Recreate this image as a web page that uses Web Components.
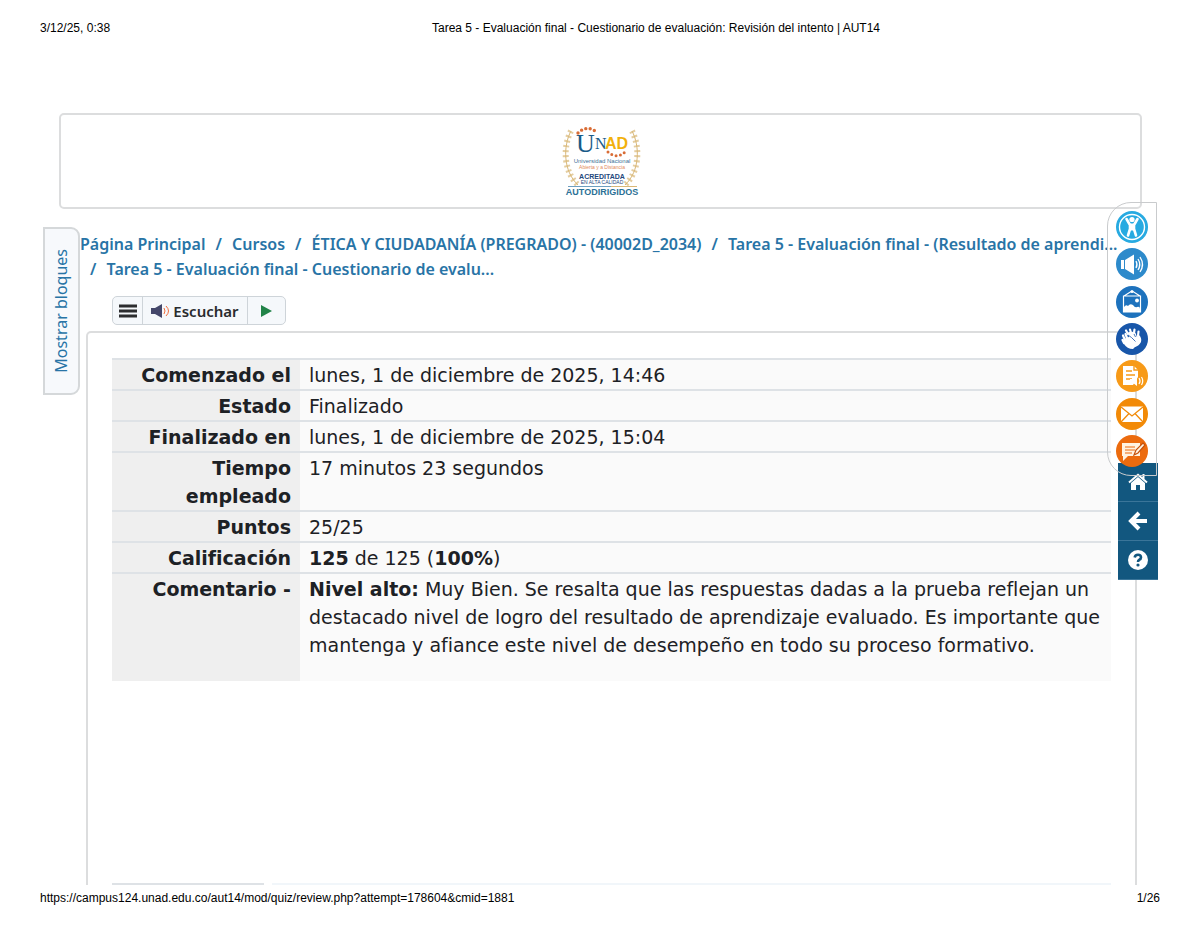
<!DOCTYPE html>
<html lang="es">
<head>
<meta charset="utf-8">
<meta name="viewport" content="width=device-width, initial-scale=1">
<title>Tarea 5 - Evaluación final - Cuestionario de evaluación: Revisión del intento | AUT14</title>
<style>
    body{
        display:flex;
        flex-direction:column;
        margin:0;
        min-height:100vh;
        background:#fff;
        color:#1d2125;
        font-family:"Noto Sans", "Open Sans", sans-serif;
        --link:#2874a6;
        --line:#dcddde;
    }
    review-panel{flex-grow:1;}
</style>
</head>
<body>

<print-line>
    <span slot="start">3/12/25, 0:38</span>
    <span slot="center">Tarea 5 - Evaluación final - Cuestionario de evaluación: Revisión del intento | AUT14</span>
</print-line>

<site-banner></site-banner>

<bread-crumb>
    <crumb-item href="#inicio">Página Principal</crumb-item>
    <crumb-item href="#cursos">Cursos</crumb-item>
    <crumb-item href="#curso">ÉTICA Y CIUDADANÍA (PREGRADO) - (40002D_2034)</crumb-item>
    <crumb-item href="#tarea">Tarea 5 - Evaluación final - (Resultado de aprendi...</crumb-item>
    <crumb-item href="#cuestionario">Tarea 5 - Evaluación final - Cuestionario de evalu...</crumb-item>
</bread-crumb>

<listen-bar>Escuchar</listen-bar>

<review-panel>
    <review-summary></review-summary>
</review-panel>

<print-line class="bottom">
    <span slot="start">https://campus124.unad.edu.co/aut14/mod/quiz/review.php?attempt=178604&amp;cmid=1881</span>
    <span slot="end">1/26</span>
</print-line>

<blocks-tab>Mostrar bloques</blocks-tab>
<page-nav></page-nav>
<access-tools></access-tools>

<template id="print-line">
<style>
    :host{
        display:grid;
        grid-template-columns:392px 1fr auto;
        padding:20px 40px 0;
        font:12px/16px "Liberation Sans", Arial, sans-serif;
        color:#000;
    }
    :host(.bottom){
        grid-template-columns:1fr auto auto;
        padding:5px 40px 22px;
    }
</style>
<slot name="start"></slot>
<slot name="center"></slot>
<slot name="end"></slot>
</template>

<template id="site-banner">
<style>
    :host{
        display:flex;
        justify-content:center;
        box-sizing:border-box;
        height:96px;
        margin:77px 58px 0 59px;
        border:2px solid var(--line);
        border-radius:5px;
    }
    svg{display:block; margin-top:11px;}
</style>
<svg width="80" height="74" viewBox="0 0 80 74" role="img" aria-label="UNAD Autodirigidos" font-family="Liberation Sans, Arial, sans-serif">
    <!-- laurel branches -->
    <g fill="none" stroke="#d9b877">
        <path d="M10 5C2 20 2 45 17 59" stroke-width="1"/>
        <path d="M10 5C2 20 2 45 17 59" stroke-width="6" stroke-dasharray="2 3" opacity=".7"/>
        <path d="M71 5C79 20 79 45 64 59" stroke-width="1"/>
        <path d="M71 5C79 20 79 45 64 59" stroke-width="6" stroke-dasharray="2 3" opacity=".7"/>
    </g>
    <!-- dotted arcs over and under the letters -->
    <path d="M17 7Q26 -2 37 7" fill="none" stroke="#d96c35" stroke-width="3.4" stroke-linecap="round" stroke-dasharray="0 4.5"/>
    <path d="M47 26Q56 34 65 25" fill="none" stroke="#d96c35" stroke-width="3" stroke-linecap="round" stroke-dasharray="0 4.5"/>
    <text x="15" y="26" font-family="Liberation Serif, serif" font-size="26" fill="#195b88">U</text>
    <text x="34" y="23" font-family="Liberation Serif, serif" font-size="16" fill="#195b88">N</text>
    <text x="44" y="23" font-size="16" font-weight="bold" fill="#f2b10c">AD</text>
    <text x="41" y="37" font-size="6" fill="#3c7197" text-anchor="middle">Universidad Nacional</text>
    <text x="41" y="43" font-size="5" fill="#e28a5a" text-anchor="middle">Abierta y a Distancia</text>
    <text x="41" y="53" font-size="7" font-weight="bold" fill="#24487c" text-anchor="middle">ACREDITADA</text>
    <text x="41" y="58" font-size="5" fill="#24487c" text-anchor="middle">EN ALTA CALIDAD</text>
    <path d="M7 60.500H76" stroke="#d9b877"/>
    <path d="M7 60.500H50" stroke="#6e9fc0"/>
    <text x="41" y="69" font-size="9" font-weight="bold" fill="#2b7196" text-anchor="middle">AUTODIRIGIDOS</text>
</svg>
</template>

<template id="bread-crumb">
<style>
    :host{
        display:block;
        margin:23px 80px 0;
    }
    nav{
        display:flex;
        flex-wrap:wrap;
        margin-right:-24px;
    }
</style>
<nav aria-label="Ruta de navegación"><slot></slot></nav>
</template>

<template id="crumb-item">
<style>
    :host{
        display:block;
        color:var(--link);
        font-size:16px;
        font-weight:600;
        line-height:25px;
        white-space:nowrap;
    }
    :host(:not(:first-child))::before{
        content:"/";
        padding:0 6px 0 10px;
    }
    a{color:inherit; text-decoration:none;}
</style>
<a><slot></slot></a>
</template>

<template id="listen-bar">
<style>
    :host{
        display:flex;
        align-self:flex-start;
        margin:14px 0 6px 112px;
        border:1px solid #ced4d9;
        border-radius:5px;
        background:#f5f8fb;
        overflow:hidden;
    }
    button{
        display:flex;
        align-items:center;
        justify-content:center;
        gap:4px;
        height:27px;
        width:38px;
        padding:0;
        border:0;
        background:none;
        color:#292b2e;
        font:600 15px/20px "Noto Sans", sans-serif;
    }
    button + button{border-left:1px solid #ced4d9;}
    .menu{width:29px;}
    .listen{width:105px;}
</style>
<button type="button" class="menu" aria-label="Menú">
    <svg width="18" height="14"><path d="M0 2H18M0 7H18M0 12H18" stroke="#2c2d2f" stroke-width="3"/></svg>
</button>
<button type="button" class="listen">
    <svg width="18" height="16" viewBox="0 0 18 16">
        <path d="M0 5H4L11 1V15L4 11H0Z" fill="#44476a"/>
        <path d="M13 5Q15 8 13 11M15 3Q20 8 15 13" fill="none" stroke="#f06d3c"/>
    </svg>
    <slot></slot>
</button>
<button type="button" aria-label="Reproducir">
    <svg width="11" height="12"><path d="M0 0L11 6L0 12Z" fill="#218348"/></svg>
</button>
</template>

<template id="review-panel">
<style>
    :host{
        display:flex;
        flex-direction:column;
        justify-content:space-between;
        gap:24px;
        margin:0 63px 0 86px;
        padding:25px 24px 0;
        border:2px solid var(--line);
        border-bottom:0;
        border-radius:5px 5px 0 0;
    }
    .next{
        display:grid;
        grid-template-columns:152px 1fr;
        gap:8px;
    }
    .next div{border-top:2px solid #dee2e6;}
    .next div:last-child{border-color:#f1f6fa;}
</style>
<slot></slot>
<div class="next"><div></div><div></div></div>
</template>

<template id="review-summary">
<style>
    :host{display:block;}
    table{
        width:100%;
        border-spacing:0;
        background:#fafafa;
        font:19px/28px Verdana, "DejaVu Sans", sans-serif;
    }
    th, td{
        padding:1px 9px 0;
        border-top:2px solid #dee2e6;
        vertical-align:top;
        text-align:left;
    }
    th{
        width:170px;
        background:#efefef;
        text-align:right;
        font-weight:700;
    }
    p{margin:0 0 22px;}
</style>
<table>
    <tbody>
        <tr><th scope="row">Comenzado el</th><td>lunes, 1 de diciembre de 2025, 14:46</td></tr>
        <tr><th scope="row">Estado</th><td>Finalizado</td></tr>
        <tr><th scope="row">Finalizado en</th><td>lunes, 1 de diciembre de 2025, 15:04</td></tr>
        <tr><th scope="row">Tiempo empleado</th><td>17 minutos 23 segundos</td></tr>
        <tr><th scope="row">Puntos</th><td>25/25</td></tr>
        <tr><th scope="row">Calificación</th><td><b>125</b> de 125 (<b>100%</b>)</td></tr>
        <tr>
            <th scope="row">Comentario -</th>
            <td><p><b>Nivel alto:</b> Muy Bien. Se resalta que las respuestas dadas a la prueba reflejan un destacado nivel de logro del resultado de aprendizaje evaluado. Es importante que mantenga y afiance este nivel de desempeño en todo su proceso formativo.</p></td>
        </tr>
    </tbody>
</table>
</template>

<template id="blocks-tab">
<style>
    :host{
        position:absolute;
        left:43px;
        top:227px;
    }
    button{
        display:block;
        padding:20px 4px;
        border:2px solid #d5d8da;
        border-radius:0 9px 9px 0;
        background:#f7f9fc;
        color:var(--link);
        font:16px/25px "Noto Sans", sans-serif;
    }
    span{
        display:block;
        writing-mode:vertical-rl;
        transform:rotate(180deg);
    }
</style>
<button type="button"><span><slot></slot></span></button>
</template>

<template id="page-nav">
<style>
    :host{
        position:absolute;
        right:42px;
        top:463px;
        width:40px;
    }
    a{
        display:flex;
        align-items:center;
        justify-content:center;
        height:38px;
        border-bottom:1px solid #3a7599;
        background:#12577f;
    }
    svg{display:block;}
</style>
<a href="#inicio" aria-label="Inicio">
    <svg width="20" height="18" viewBox="0 0 20 18" fill="#fff">
        <path d="M10 4L17 10V17H12V12H8V17H3V10Z"/>
        <path d="M1 9.500L10 1.800L19 9.500M15.500 1V6" fill="none" stroke="#fff" stroke-width="2"/>
    </svg>
</a>
<a href="#volver" aria-label="Volver">
    <svg width="20" height="20" viewBox="0 0 20 20"><path d="M11 2L3 10L11 18M4 10H19" fill="none" stroke="#fff" stroke-width="4"/></svg>
</a>
<a href="#ayuda" aria-label="Ayuda">
    <svg width="20" height="20" viewBox="0 0 20 20">
        <circle cx="10" cy="10" r="10" fill="#fff"/>
        <path d="M6.700 7.500Q7 4.800 10 4.800Q13 4.800 13 7.500Q13 9 11.200 9.800Q10 10.500 10 12" fill="none" stroke="#12577f" stroke-width="2.600"/>
        <circle cx="10" cy="15" r="1.600" fill="#12577f"/>
    </svg>
</a>
</template>

<template id="access-tools">
<style>
    :host{
        position:absolute;
        right:43px;
        top:202px;
        display:flex;
        flex-direction:column;
        align-items:center;
        justify-content:space-between;
        box-sizing:border-box;
        width:50px;
        height:274px;
        padding:8px 0;
        border:1px solid #c9cbcd;
        border-radius:24px 0 0 24px;
    }
    button{
        padding:0;
        border:0;
        background:none;
    }
    svg{display:block; width:32px; height:32px;}
</style>
<button type="button" aria-label="Accesibilidad">
    <svg viewBox="0 0 32 32">
        <circle cx="16" cy="16" r="16" fill="#27aae1"/>
        <circle cx="16" cy="16" r="12.500" fill="none" stroke="#fff" stroke-width="1.400"/>
        <circle cx="16" cy="8.500" r="2.600" fill="#fff"/>
        <path d="M10.500 8L14 14L14 18L12 24.500M21.500 8L18 14L18 18L20 24.500" fill="none" stroke="#fff" stroke-width="2.600" stroke-linecap="round" stroke-linejoin="round"/>
        <path d="M13 12.500H19V19.500H13Z" fill="#fff"/>
    </svg>
</button>
<button type="button" aria-label="Audio">
    <svg viewBox="0 0 32 32">
        <circle cx="16" cy="16" r="16" fill="#2d8acb"/>
        <path d="M5 12H9L18 6.500V26.500L9 21H5Z" fill="#fff"/>
        <path d="M8.500 12V21" stroke="#2d8acb"/>
        <path d="M20 13Q22 16.500 20 20M22 11Q25.500 16.500 22 22M24 9Q29 16.500 24 24" fill="none" stroke="#fff" stroke-width="1.300"/>
    </svg>
</button>
<button type="button" aria-label="Imágenes">
    <svg viewBox="0 0 32 32">
        <circle cx="16" cy="16" r="16" fill="#1d72bd"/>
        <path d="M7.500 10H24.500V26H7.500ZM8 10L15 5.500H17L24 10" fill="none" stroke="#fff" stroke-width="1.200"/>
        <circle cx="16" cy="5.500" r="1.500" fill="#fff"/>
        <circle cx="21" cy="14.500" r="1.900" fill="#fff"/>
        <path d="M8 26V21Q10 18 12 20Q14 17 17 19Q19 22 21 21Q24 20 24 23V26Z" fill="#fff"/>
    </svg>
</button>
<button type="button" aria-label="Lengua de señas">
    <svg viewBox="0 0 32 32">
        <circle cx="16" cy="16" r="16" fill="#1856a9"/>
        <!-- back hand, then front hand -->
        <path d="M12 11L10 7.500M15 10L14 6.500M18 10L18.500 6.500M22 13L22.500 8.500" stroke="#fff" stroke-width="2.200" stroke-linecap="round"/>
        <path d="M11 10Q16 7.500 19.500 10L21 14L23 12Q26 15 25 19Q23 23 19 24Z" fill="#fff"/>
        <path d="M9 17L7 12.500M11 15L9.500 11M8 20L6.500 17" stroke="#fff" stroke-width="2.200" stroke-linecap="round"/>
        <path d="M8 16L14 13.500L19 18L20 23L17 26Q11 26 8 21Z" fill="#fff"/>
        <path d="M12 12L15.500 14.500L19.500 18.500M18 11L19.500 14" fill="none" stroke="#1856a9" stroke-width=".8"/>
    </svg>
</button>
<button type="button" aria-label="Transcripción">
    <svg viewBox="0 0 32 32">
        <circle cx="16" cy="16" r="16" fill="#f79a18"/>
        <path d="M7 6H18L22 10V17L17 25H7Z" fill="#fff"/>
        <path d="M18 6V10H22M10 11H16M10 15H19M10 19H16" fill="none" stroke="#f79a18" stroke-width="1.400"/>
        <path d="M14 19H17L21 16V26L17 23H14Z" fill="#fff"/>
        <path d="M23 18Q25 21 23 24M25.500 17Q28 21 25.500 25" fill="none" stroke="#fff" stroke-width="1.200"/>
    </svg>
</button>
<button type="button" aria-label="Correo">
    <svg viewBox="0 0 32 32">
        <circle cx="16" cy="16" r="16" fill="#f28a07"/>
        <path d="M5 8.500H27V24H5Z" fill="#fff"/>
        <path d="M5 9L16 18L27 9M5 24L13 15.500M27 24L19 15.500" fill="none" stroke="#f28a07" stroke-width="1.300"/>
    </svg>
</button>
<button type="button" aria-label="Comentarios">
    <svg viewBox="0 0 32 32">
        <circle cx="16" cy="16" r="16" fill="#ec6b0e"/>
        <path d="M6 8H24V21H12L7 26V21H6Z" fill="#fff3e2"/>
        <path d="M9 12H19M9 15H19M9 18H16" stroke="#ec6b0e" stroke-width="1.200"/>
        <path d="M18 20L20 15L27 8L29 10L22 18Z" fill="#fff3e2" stroke="#c6510a" stroke-width="1.200"/>
    </svg>
</button>
</template>

<script>
// every element only clones its own template
class baseElement extends HTMLElement {
  constructor() {
    super();
    const shadow = this.attachShadow({mode: 'open'});
    const template = document.getElementById(this.localName);
    shadow.append(template.content.cloneNode(true));
  }
}

class crumbItem extends baseElement {
  connectedCallback() {
    this.shadowRoot.querySelector('a').setAttribute('href', this.getAttribute('href'));
  }
}

customElements.define('print-line', class extends baseElement {});
customElements.define('site-banner', class extends baseElement {});
customElements.define('bread-crumb', class extends baseElement {});
customElements.define('crumb-item', crumbItem);
customElements.define('listen-bar', class extends baseElement {});
customElements.define('review-panel', class extends baseElement {});
customElements.define('review-summary', class extends baseElement {});
customElements.define('blocks-tab', class extends baseElement {});
customElements.define('page-nav', class extends baseElement {});
customElements.define('access-tools', class extends baseElement {});
</script>
</body>
</html>
